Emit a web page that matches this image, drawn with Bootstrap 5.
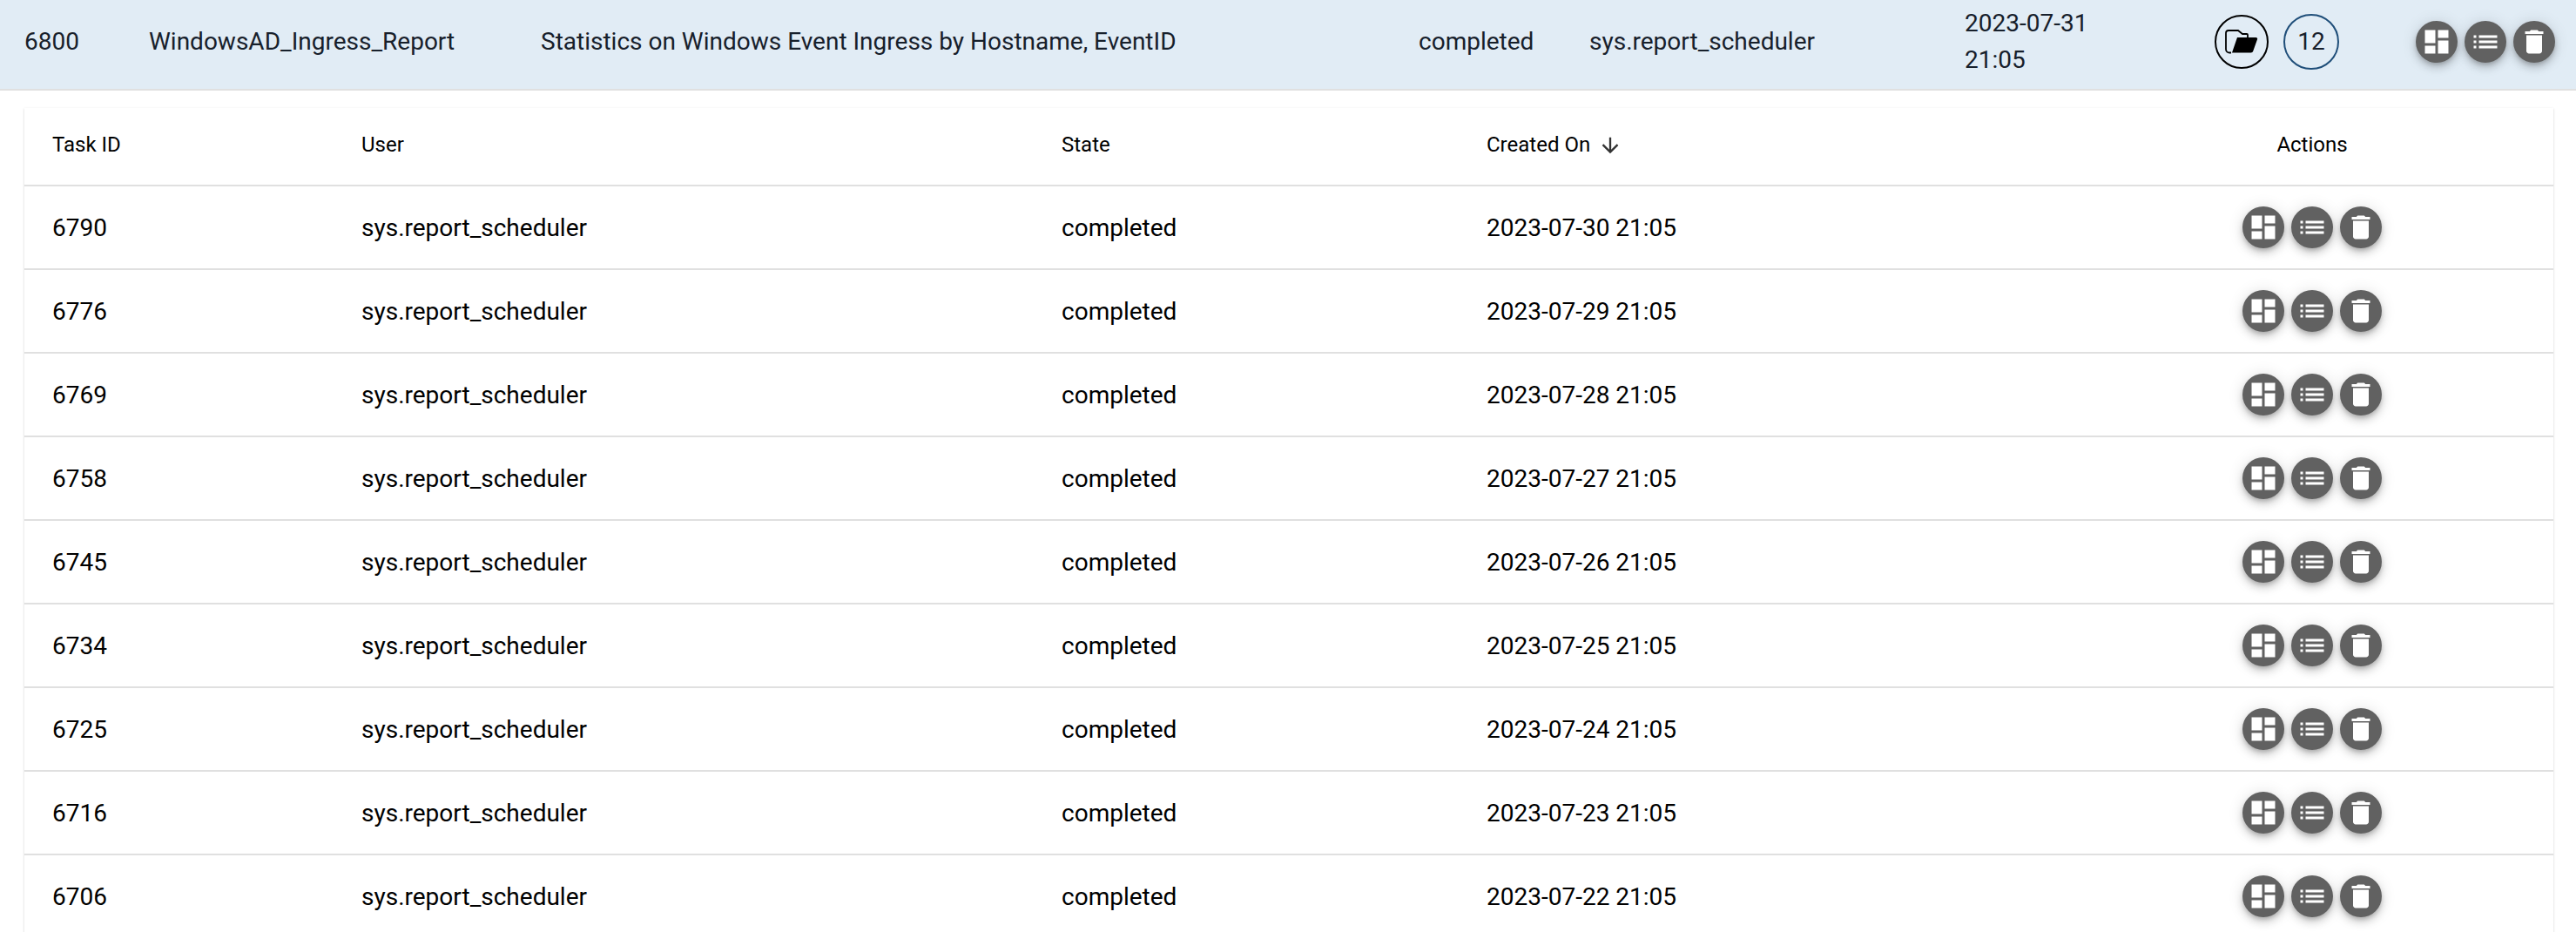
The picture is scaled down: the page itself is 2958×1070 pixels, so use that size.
<!DOCTYPE html>
<html lang="en"><head><meta charset="utf-8"><title>Reports</title>
<link href="https://cdn.jsdelivr.net/npm/bootstrap@5.3.0/dist/css/bootstrap.min.css" rel="stylesheet">
<style>
html,body{height:1070px;overflow:hidden;background:#fff;font-family:Roboto,"Liberation Sans",sans-serif;color:#1a2027;}
.rep-head{height:104px;background:#e1ecf5;border-bottom:2px solid #e0e0e0;padding-bottom:6px;font-size:28px;color:#17202b;}
.rep-head>*{flex:none;}
.h-id{width:143px;margin-left:28px;}.h-name{width:450px;}.h-desc{width:1008px;}.h-state{width:196px;}.h-user{width:431px;}.h-date{width:287px;line-height:42px;}
.circ-folder{width:62px;height:62px;border:2px solid #000;margin-right:17px;}
.circ-count{width:64px;height:64px;border:2px solid #1f4e79;margin-right:88px;}
.act{width:48px;height:48px;background:#616161;box-shadow:0 3px 5px -1px rgba(0,0,0,.2),0 6px 10px 0 rgba(0,0,0,.14),0 1px 18px 0 rgba(0,0,0,.12);}
.act svg{width:36px;height:36px;fill:#fff;}
.rep-wrap{padding:20px 26px 0 28px;}
.rep-card{box-shadow:0 2px 1px -1px rgba(0,0,0,.2),0 1px 1px 0 rgba(0,0,0,.14),0 1px 3px 0 rgba(0,0,0,.12);}
.rep-table{table-layout:fixed;width:100%;margin:0;font-size:28px;color:#000;}
.rep-table th,.rep-table td{padding:0 0 0 32px;border-bottom:2px solid #e0e0e0;vertical-align:middle;height:96px;font-weight:400;}
.rep-table td:not(.ctr){padding-top:2px;}
.rep-table thead th{height:89px;font-size:24px;padding-bottom:4px;}
.rep-table th.ctr,.rep-table td.ctr{padding-left:0;padding-right:0;text-align:center;}
.col-a{width:355px;}.col-b{width:804px;}.col-c{width:488px;}.col-d{width:703px;}
.arrow{width:28px;height:28px;fill:#333;margin-left:9px;vertical-align:-7px;}
</style></head><body>
<svg width="0" height="0" class="d-block position-absolute"><defs>
<symbol id="i-dash" viewBox="0 0 24 24"><path d="M3 13h8V3H3v10zm0 8h8v-6H3v6zm10 0h8V11h-8v10zm0-18v6h8V3h-8z"/></symbol>
<symbol id="i-list" viewBox="0 0 24 24"><path d="M3 13h2v-2H3v2zm0 4h2v-2H3v2zm0-8h2V7H3v2zm4 4h14v-2H7v2zm0 4h14v-2H7v2zM7 7v2h14V7H7z"/></symbol>
<symbol id="i-del" viewBox="0 0 24 24"><path d="M6 19c0 1.100.9 2 2 2h8c1.100 0 2-.9 2-2V7H6v12zM19 4h-3.500l-1-1h-5l-1 1H5v2h14V4z"/></symbol>
</defs></svg>
<div class="rep-head d-flex align-items-center">
<div class="h-id">6800</div>
<div class="h-name">WindowsAD_Ingress_Report</div>
<div class="h-desc">Statistics on Windows Event Ingress by Hostname, EventID</div>
<div class="h-state">completed</div>
<div class="h-user">sys.report_scheduler</div>
<div class="h-date">2023-07-31<br>21:05</div>
<div class="circ-folder rounded-circle d-flex align-items-center justify-content-center">
<svg width="38" height="28" viewBox="0 0 38 28"><path d="M7 26.500H5a4 4 0 0 1-4-4V4a3 3 0 0 1 3-3h11l5 4h5a1 1 0 0 1 1 1v3" fill="none" stroke="#000" stroke-width="1.800"/><path d="M14 9h21.500c1.200 0 2 1 1.600 2l-4.800 13.500c-.4 1.200-1.300 2-2.500 2H8z"/></svg>
</div>
<div class="circ-count rounded-circle d-flex align-items-center justify-content-center">12</div>
<div class="d-flex gap-2">
<div class="act rounded-circle d-flex align-items-center justify-content-center"><svg><use href="#i-dash"/></svg></div>
<div class="act rounded-circle d-flex align-items-center justify-content-center"><svg><use href="#i-list"/></svg></div>
<div class="act rounded-circle d-flex align-items-center justify-content-center"><svg><use href="#i-del"/></svg></div>
</div>
</div>
<div class="rep-wrap"><div class="rep-card">
<table class="table rep-table" id="tb">
<colgroup><col class="col-a"><col class="col-b"><col class="col-c"><col class="col-d"><col></colgroup>
<thead><tr><th>Task ID</th><th>User</th><th>State</th><th>Created On<svg class="arrow" viewBox="0 0 24 24"><path d="M20 12l-1.410-1.410L13 16.170V4h-2v12.170l-5.580-5.590L4 12l8 8 8-8z"/></svg></th><th class="ctr">Actions</th></tr></thead>
<tbody>
<tr><td>6790</td><td>sys.report_scheduler</td><td>completed</td><td>2023-07-30 21:05</td><td class="ctr"><div class="d-flex gap-2 justify-content-center"><div class="act rounded-circle d-flex align-items-center justify-content-center"><svg><use href="#i-dash"/></svg></div><div class="act rounded-circle d-flex align-items-center justify-content-center"><svg><use href="#i-list"/></svg></div><div class="act rounded-circle d-flex align-items-center justify-content-center"><svg><use href="#i-del"/></svg></div></div></td></tr>
<tr><td>6776</td><td>sys.report_scheduler</td><td>completed</td><td>2023-07-29 21:05</td><td class="ctr"><div class="d-flex gap-2 justify-content-center"><div class="act rounded-circle d-flex align-items-center justify-content-center"><svg><use href="#i-dash"/></svg></div><div class="act rounded-circle d-flex align-items-center justify-content-center"><svg><use href="#i-list"/></svg></div><div class="act rounded-circle d-flex align-items-center justify-content-center"><svg><use href="#i-del"/></svg></div></div></td></tr>
<tr><td>6769</td><td>sys.report_scheduler</td><td>completed</td><td>2023-07-28 21:05</td><td class="ctr"><div class="d-flex gap-2 justify-content-center"><div class="act rounded-circle d-flex align-items-center justify-content-center"><svg><use href="#i-dash"/></svg></div><div class="act rounded-circle d-flex align-items-center justify-content-center"><svg><use href="#i-list"/></svg></div><div class="act rounded-circle d-flex align-items-center justify-content-center"><svg><use href="#i-del"/></svg></div></div></td></tr>
<tr><td>6758</td><td>sys.report_scheduler</td><td>completed</td><td>2023-07-27 21:05</td><td class="ctr"><div class="d-flex gap-2 justify-content-center"><div class="act rounded-circle d-flex align-items-center justify-content-center"><svg><use href="#i-dash"/></svg></div><div class="act rounded-circle d-flex align-items-center justify-content-center"><svg><use href="#i-list"/></svg></div><div class="act rounded-circle d-flex align-items-center justify-content-center"><svg><use href="#i-del"/></svg></div></div></td></tr>
<tr><td>6745</td><td>sys.report_scheduler</td><td>completed</td><td>2023-07-26 21:05</td><td class="ctr"><div class="d-flex gap-2 justify-content-center"><div class="act rounded-circle d-flex align-items-center justify-content-center"><svg><use href="#i-dash"/></svg></div><div class="act rounded-circle d-flex align-items-center justify-content-center"><svg><use href="#i-list"/></svg></div><div class="act rounded-circle d-flex align-items-center justify-content-center"><svg><use href="#i-del"/></svg></div></div></td></tr>
<tr><td>6734</td><td>sys.report_scheduler</td><td>completed</td><td>2023-07-25 21:05</td><td class="ctr"><div class="d-flex gap-2 justify-content-center"><div class="act rounded-circle d-flex align-items-center justify-content-center"><svg><use href="#i-dash"/></svg></div><div class="act rounded-circle d-flex align-items-center justify-content-center"><svg><use href="#i-list"/></svg></div><div class="act rounded-circle d-flex align-items-center justify-content-center"><svg><use href="#i-del"/></svg></div></div></td></tr>
<tr><td>6725</td><td>sys.report_scheduler</td><td>completed</td><td>2023-07-24 21:05</td><td class="ctr"><div class="d-flex gap-2 justify-content-center"><div class="act rounded-circle d-flex align-items-center justify-content-center"><svg><use href="#i-dash"/></svg></div><div class="act rounded-circle d-flex align-items-center justify-content-center"><svg><use href="#i-list"/></svg></div><div class="act rounded-circle d-flex align-items-center justify-content-center"><svg><use href="#i-del"/></svg></div></div></td></tr>
<tr><td>6716</td><td>sys.report_scheduler</td><td>completed</td><td>2023-07-23 21:05</td><td class="ctr"><div class="d-flex gap-2 justify-content-center"><div class="act rounded-circle d-flex align-items-center justify-content-center"><svg><use href="#i-dash"/></svg></div><div class="act rounded-circle d-flex align-items-center justify-content-center"><svg><use href="#i-list"/></svg></div><div class="act rounded-circle d-flex align-items-center justify-content-center"><svg><use href="#i-del"/></svg></div></div></td></tr>
<tr><td>6706</td><td>sys.report_scheduler</td><td>completed</td><td>2023-07-22 21:05</td><td class="ctr"><div class="d-flex gap-2 justify-content-center"><div class="act rounded-circle d-flex align-items-center justify-content-center"><svg><use href="#i-dash"/></svg></div><div class="act rounded-circle d-flex align-items-center justify-content-center"><svg><use href="#i-list"/></svg></div><div class="act rounded-circle d-flex align-items-center justify-content-center"><svg><use href="#i-del"/></svg></div></div></td></tr>
</tbody></table>
</div></div>
<script src="https://cdn.jsdelivr.net/npm/bootstrap@5.3.0/dist/js/bootstrap.bundle.min.js"></script>
</body></html>
